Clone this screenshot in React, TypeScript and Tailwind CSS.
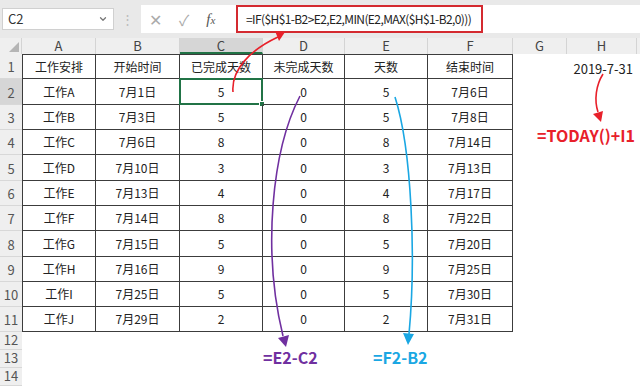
import { ChevronDown } from "lucide-react";

const COLS = ["A", "B", "C", "D", "E", "F", "G", "H"];
const WIDTHS = ["w-[74px]", "w-[84px]", "w-[83px]", "w-[82px]", "w-[83px]", "w-[85px]", "w-[54px]", "w-[70px]"];
const HEIGHTS = ["h-[25px]", "h-[26px]", "h-[25px]", "h-[25px]", "h-[26px]", "h-[25px]", "h-[25px]", "h-[26px]", "h-[25px]", "h-[25px]", "h-[25px]"];

const names = ["工作A", "工作B", "工作C", "工作D", "工作E", "工作F", "工作G", "工作H", "工作I", "工作J"];
const starts = ["7月1日", "7月3日", "7月6日", "7月10日", "7月13日", "7月14日", "7月15日", "7月16日", "7月25日", "7月29日"];
const done = ["5", "5", "8", "3", "4", "8", "5", "9", "5", "2"];
const days = ["5", "5", "8", "3", "4", "8", "5", "9", "5", "2"];
const ends = ["7月6日", "7月8日", "7月14日", "7月13日", "7月17日", "7月22日", "7月20日", "7月25日", "7月30日", "7月31日"];

const rows: string[][] = [
	["工作安排", "开始时间", "已完成天数", "未完成天数", "天数", "结束时间"],
	...names.map((n, i) => [n, starts[i], done[i], "0", days[i], ends[i]]),
];

function Arrows() {
	return (
		<svg className="absolute inset-0 pointer-events-none" width="640" height="387" viewBox="0 0 640 387">
			<path d="M233 92 C231 70 250 50 278 37" fill="none" stroke="#e8202a" strokeWidth="1.6" />
			<polygon points="285,32 275,31 279,41" fill="#e8202a" />
			<path d="M300 96 C272 150 262 250 283 336" fill="none" stroke="#7030a0" strokeWidth="1.6" />
			<polygon points="286,347 289,335 278,338" fill="#7030a0" />
			<path d="M395 97 C412 150 416 260 409 334" fill="none" stroke="#1aa7e3" strokeWidth="1.6" />
			<polygon points="408,345 414,334 403,333" fill="#1aa7e3" />
			<path d="M603 74 C596 85 594 100 598 112" fill="none" stroke="#e8202a" strokeWidth="1.6" />
			<polygon points="601,122 603,111 593,114" fill="#e8202a" />
		</svg>
	);
}

export default function App() {
	return (
		<div className="relative w-[640px] h-[387px] overflow-hidden bg-white text-[#222]" style={{ fontFamily: '"Noto Sans CJK SC", "Noto Sans", sans-serif' }}>
			{/* formula bar */}
			<div className="flex items-center h-[38px] bg-[#e9e9e9] pl-[2px]">
				<div className="flex items-center justify-between w-[112px] h-[22px] bg-white border border-[#d0d0d0] px-[5px] text-[13px] text-[#333]">
					<span>C2</span>
					<ChevronDown size={10} strokeWidth={3} className="text-[#777]" />
				</div>
				<div className="w-[27px] flex justify-center text-[#bbb] text-[13px]">⋮</div>
				<div className="flex-1 flex items-center h-[28px] bg-white">
					<div className="flex items-center w-[95px] pl-[8px] gap-[17px] text-[#aaa]">
						<span className="text-[16px] leading-none">✕</span>
						<span className="text-[15px] leading-none">✓</span>
						<span className="text-[15px] italic text-[#555] leading-none" style={{ fontFamily: '"Liberation Serif", serif' }}>
							f<span className="text-[11px]">x</span>
						</span>
					</div>
					<div className="flex items-center h-[28px] w-[247px] border-2 border-[#d42a30] pl-[8px] text-[12px] tracking-[-0.6px] text-[#222] whitespace-nowrap">
						=IF($H$1-B2&gt;E2,E2,MIN(E2,MAX($H$1-B2,0)))
					</div>
				</div>
			</div>

			{/* column headers */}
			<div className="flex h-[16px] bg-[#efefef] text-[13px] text-[#444] leading-[16px]">
				<div className="w-[22px] relative border-r border-[#d4d4d4]">
					<div className="absolute right-[2px] bottom-[2px] w-0 h-0 border-l-[10px] border-l-transparent border-b-[10px] border-b-[#b5b5b5]" />
				</div>
				{COLS.map((c, i) => (
					<div
						key={c}
						className={`${WIDTHS[i]} text-center border-r border-[#d4d4d4] ${c === "C" ? "bg-[#d6d6d6] border-b-2 border-b-[#217346]" : ""}`}
					>
						{c}
					</div>
				))}
			</div>

			{/* body */}
			<div className="text-[12px]">
				{rows.map((r, ri) => (
					<div key={ri} className={`flex ${HEIGHTS[ri]}`}>
						<div
							className={`w-[22px] flex items-end justify-center pb-[2px] text-[13px] text-[#555] border-b border-[#d8d8d8] ${ri === 1 ? "bg-[#d6d6d6]" : "bg-[#efefef]"}`}
						>
							{ri + 1}
						</div>
						{r.map((v, ci) => (
							<div
								key={ci}
								className={`relative ${WIDTHS[ci]} flex items-center justify-center border-r border-b border-[#3c3c3c] ${ri === 0 ? "border-t" : ""} ${ci === 0 ? "border-l" : ""}`}
							>
								{v}
								{ri === 1 && ci === 2 && (
									<div className="absolute -inset-px border-2 border-[#217346]">
										<div className="absolute -right-[4px] -bottom-[4px] w-[6px] h-[6px] bg-[#217346] border border-white" />
									</div>
								)}
							</div>
						))}
						<div className={`${WIDTHS[6]}`} />
						<div className={`${WIDTHS[7]} flex items-end justify-end pr-[4px] pb-[1px] text-[13px]`}>
							{ri === 0 ? "2019-7-31" : ""}
						</div>
					</div>
				))}
				{[12, 13, 14].map((n) => (
					<div key={n} className="flex h-[18px]">
						<div className="w-[22px] flex items-end justify-center bg-[#efefef] text-[13px] text-[#555] border-b border-[#d8d8d8]">
							{n}
						</div>
						<div className="flex-1" />
					</div>
				))}
			</div>

			{/* annotation labels */}
			<div className="absolute left-[537px] top-[127px] text-[16px] font-bold text-[#e8202a] leading-none">=TODAY()+I1</div>
			<div className="absolute left-[263px] top-[349px] text-[16px] font-bold text-[#7030a0] leading-none">=E2-C2</div>
			<div className="absolute left-[373px] top-[349px] text-[16px] font-bold text-[#1aa7e3] leading-none">=F2-B2</div>

			<Arrows />
		</div>
	);
}
